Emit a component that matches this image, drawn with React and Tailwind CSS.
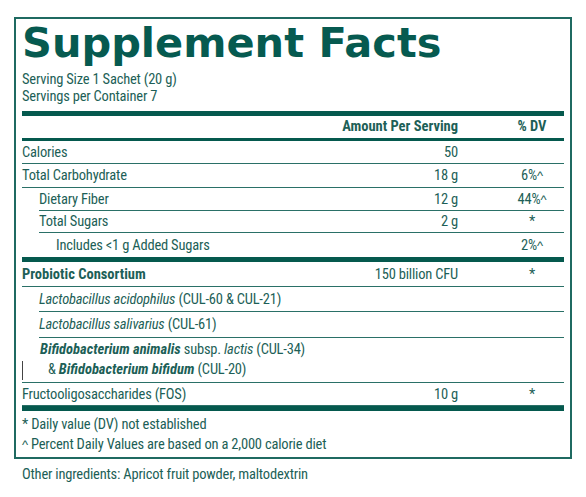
import React from "react";

function Caret() {
  return <span className="[font-family:'Liberation_Sans',sans-serif] [font-stretch:100%] text-[13px]">^</span>;
}

function Cells({ amount = "", dv = "" }) {
  return (
    <>
      <div className="w-[150px] text-right">{amount}</div>
      <div className="w-[106px] pl-[42px]">
        <div className="w-[64px] text-center">{dv}</div>
      </div>
    </>
  );
}

function Row({ label, amount = "", dv = "", className = "", labelClass = "" }) {
  return (
    <div className={`flex items-center border-b-[1.5px] border-[#2a7067] ${className}`}>
      <div className={`flex-1 ${labelClass}`}>{label}</div>
      <Cells amount={amount} dv={dv} />
    </div>
  );
}

export default function App() {
  return (
    <div className="bg-white w-[586px] h-[497px] text-[#1d5f57] text-[14.5px] leading-[17px] tracking-[-0.2px] [font-family:Roboto,sans-serif] [font-stretch:75%]">
      <div className="pt-[17px] pl-[14px]">
        <div className="w-[558px] border-2 border-[#1f6a61] px-[6px] pt-[3px] pb-[2px]">
          <div className="text-[41.5px] leading-[41px] tracking-normal font-bold text-[#065a50] [font-family:'DejaVu_Sans',sans-serif] [font-stretch:100%]">
            Supplement Facts
          </div>
          <div className="mt-[8px]">
            <div>Serving Size 1 Sachet (20 g)</div>
            <div>Servings per Container 7</div>
          </div>
          <div className="mt-[6px] h-[5px] bg-[#05594e]" />
          <div className="flex items-center h-[22px] leading-[22px] font-bold tracking-normal">
            <div className="flex-1" />
            <Cells amount="Amount Per Serving" dv="% DV" />
          </div>
          <div className="h-[3px] bg-[#05594e]" />
          <Row className="h-[23px]" label="Calories" amount="50" />
          <Row className="h-[24px]" label="Total Carbohydrate" amount="18 g" dv={<>6%<Caret /></>} />
          <Row className="h-[23px] ml-[17px]" label="Dietary Fiber" amount="12 g" dv={<>44%<Caret /></>} />
          <Row className="h-[22px] ml-[17px]" label="Total Sugars" amount="2 g" dv="*" />
          <div className="flex items-center h-[24px]">
            <div className="flex-1 pl-[34px]">Includes &lt;1 g Added Sugars</div>
            <Cells dv={<>2%<Caret /></>} />
          </div>
          <div className="h-[5px] bg-[#05594e]" />
          <Row
            className="h-[25px]"
            labelClass="font-bold tracking-normal"
            label="Probiotic Consortium"
            amount="150 billion CFU"
            dv="*"
          />
          <Row
            className="h-[25px] ml-[17px]"
            label={<><span className="italic">Lactobacillus acidophilus</span> (CUL-60 &amp; CUL-21)</>}
          />
          <Row
            className="h-[26px] ml-[17px]"
            label={<><span className="italic">Lactobacillus salivarius</span> (CUL-61)</>}
          />
          <div className="relative h-[45px] border-b-[1.5px] border-[#2a7067] pl-[18px] pt-[2px] leading-[20px]">
            <div>
              <span className="italic font-bold tracking-normal">Bifidobacterium animalis</span> subsp.{" "}
              <span className="italic">lactis</span> (CUL-34)
            </div>
            <div className="pl-[8px]">
              &amp; <span className="italic font-bold tracking-normal">Bifidobacterium bifidum</span> (CUL-20)
            </div>
            <div className="absolute left-0 top-[23px] w-px h-[19px] bg-[#444]" />
          </div>
          <Row className="h-[23px]" label="Fructooligosaccharides (FOS)" amount="10 g" dv="*" />
          <div className="h-[5px] bg-[#05594e]" />
          <div className="pt-[4px] leading-[20px]">
            <div>* Daily value (DV) not established</div>
            <div><Caret /> Percent Daily Values are based on a 2,000 calorie diet</div>
          </div>
        </div>
        <div className="mt-[6px] pl-[8px] leading-[20px]">Other ingredients: Apricot fruit powder, maltodextrin</div>
      </div>
    </div>
  );
}
